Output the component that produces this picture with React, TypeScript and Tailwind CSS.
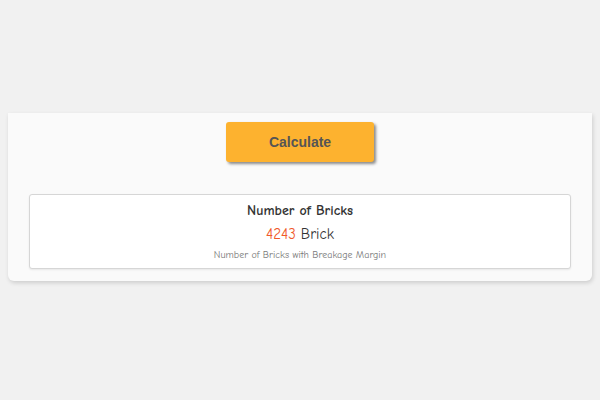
import React from "react";

export default function App() {
  return (
    <div className="w-[600px] h-[400px] bg-[#f1f1f1] pt-[113px] px-[8px]" style={{ fontFamily: '"Comic Sans MS", "Comic Neue", cursive' }}>
      <div className="bg-[#fafafa] rounded-b-[6px] shadow-[1px_2px_4px_rgba(0,0,0,0.15)] pt-[9px] pb-[12px] px-[21px] flex flex-col items-center">
        <button className="w-[148px] h-[40px] bg-[#fdb22f] rounded-[3px] shadow-[2px_2px_3px_rgba(0,0,0,0.45)] text-[#555] text-[14px] font-bold" style={{ fontFamily: '"Liberation Sans", Arial, sans-serif' }}>
          Calculate
        </button>
        <div className="mt-[32px] w-full h-[75px] bg-white border border-[#d6d6d6] rounded-[3px] shadow-[0_1px_2px_rgba(0,0,0,0.08)] flex flex-col items-center pt-[7px]">
          <div className="text-[14px] leading-[18px] text-[#333] font-semibold">Number of Bricks</div>
          <div className="mt-[5px] text-[15px] leading-[18px] text-[#333]">
            <span className="text-[#f0582a]">4243</span> Brick
          </div>
          <div className="mt-[6px] text-[10px] leading-[13px] text-[#777]">Number of Bricks with Breakage Margin</div>
        </div>
      </div>
    </div>
  );
}
